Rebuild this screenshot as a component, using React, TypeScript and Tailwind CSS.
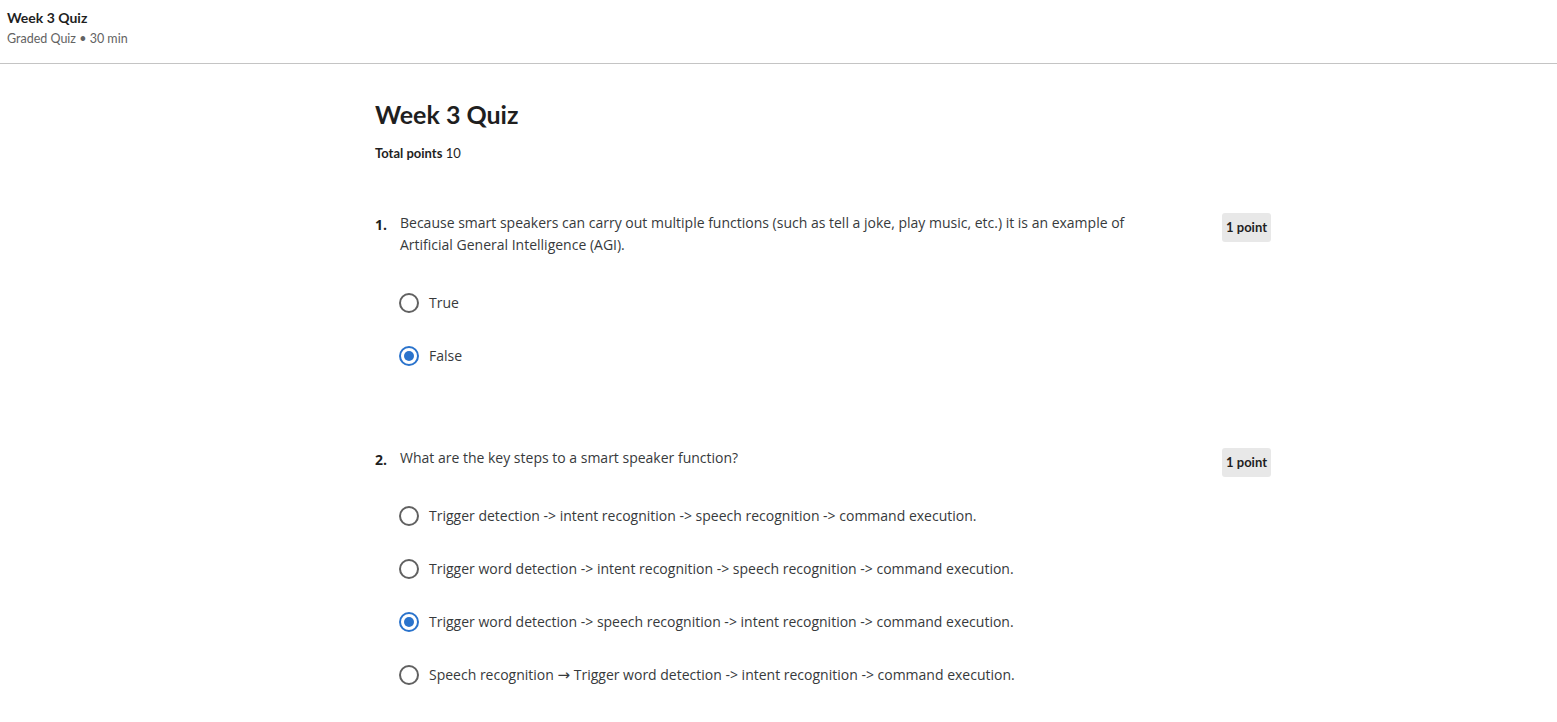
import React from "react";

function Radio({ checked }: { checked?: boolean }) {
  return checked ? (
    <span className="flex h-[20px] w-[20px] shrink-0 items-center justify-center rounded-full border-2 border-[#2a73cc]">
      <span className="h-[10px] w-[10px] rounded-full bg-[#2a73cc]" />
    </span>
  ) : (
    <span className="h-[20px] w-[20px] shrink-0 rounded-full border-2 border-[#616161]" />
  );
}

function Option({ label, checked }: { label: React.ReactNode; checked?: boolean }) {
  return (
    <div className="flex h-[53px] items-center gap-[10px]">
      <Radio checked={checked} />
      <span className="text-[14px] leading-[21px] text-[#373a3c]">{label}</span>
    </div>
  );
}

function Question({
  n,
  text,
  options,
  checkedIndex,
}: {
  n: number;
  text: React.ReactNode;
  options: React.ReactNode[];
  checkedIndex: number;
}) {
  return (
    <div className="flex">
      <div className="w-[25px] shrink-0 pt-[2px] text-[14px] font-bold leading-[21px] text-[#1f1f1f]">{n}.</div>
      <div className="flex-1">
        <div className="flex items-start justify-between">
          <div className="w-[770px] text-[14px] leading-[22px] text-[#373a3c]">{text}</div>
          <div className="mt-[1px] -mb-[8px] rounded-[3px] bg-[#e8e8e8] px-[4px] py-[5px] font-['Lato',sans-serif] text-[13px] font-bold leading-[19px] text-[#1f1f1f]">
            1 point
          </div>
        </div>
        <div className="-ml-[1px] mt-[20px] flex flex-col">
          {options.map((o, i) => (
            <Option key={i} label={o} checked={i === checkedIndex} />
          ))}
        </div>
      </div>
    </div>
  );
}

export default function App() {
  return (
    <div className="min-h-screen bg-white font-['Open_Sans',sans-serif]">
      <header className="h-[64px] border-b border-[#c4c4c4] px-[7px] pt-[8px] font-['Lato',sans-serif]">
        <div className="text-[14px] font-bold leading-[20px] text-[#1f1f1f]">Week 3 Quiz</div>
        <div className="mt-[2px] text-[12.5px] leading-[18px] text-[#636363]">Graded Quiz • 30 min</div>
      </header>
      <main className="pl-[375px] pt-[33px]">
        <div className="w-[896px]">
          <h1 className="font-['Lato',sans-serif] text-[25px] font-bold leading-[34px] text-[#1f1f1f]">Week 3 Quiz</h1>
          <div className="mt-[13px] font-['Lato',sans-serif] text-[13px] leading-[18px] text-[#1f1f1f]">
            <span className="font-bold">Total points</span> 10
          </div>
          <div className="mt-[50px]">
            <Question
              n={1}
              text="Because smart speakers can carry out multiple functions (such as tell a joke, play music, etc.) it is an example of Artificial General Intelligence (AGI)."
              options={["True", "False"]}
              checkedIndex={1}
            />
          </div>
          <div className="mt-[65px]">
            <Question
              n={2}
              text="What are the key steps to a smart speaker function?"
              options={[
                "Trigger detection -> intent recognition -> speech recognition -> command execution.",
                "Trigger word detection -> intent recognition -> speech recognition -> command execution.",
                "Trigger word detection -> speech recognition -> intent recognition -> command execution.",
                <>
                  Speech recognition{" "}
                  <span className="font-['DejaVu_Sans',sans-serif] text-[15px]">{"\u2192"}</span> Trigger word
                  detection -&gt; intent recognition -&gt; command execution.
                </>,
              ]}
              checkedIndex={2}
            />
          </div>
        </div>
      </main>
    </div>
  );
}
